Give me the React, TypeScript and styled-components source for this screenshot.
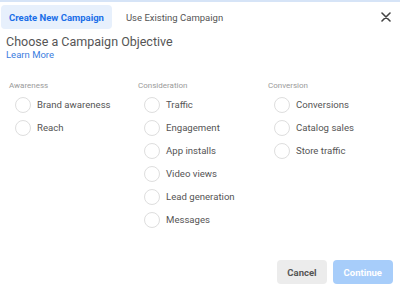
import styled, { createGlobalStyle } from 'styled-components';

const GlobalStyle = createGlobalStyle`
  html, body {
    margin: 0;
    padding: 0;
    background: #ffffff;
  }
  body {
    font-family: Roboto, "Liberation Sans", Arial, sans-serif;
  }
`;

const Dialog = styled.div`
  width: 400px;
  height: 304px;
  box-sizing: border-box;
  border-top: 2px solid #d6e4f7;
  display: flex;
  flex-direction: column;
  background: #fff;
`;

const TabBar = styled.div`
  display: flex;
  align-items: center;
  height: 26px;
  padding: 2px 0 0 1px;
`;

const Tab = styled.div<{ $active?: boolean }>`
  height: 24px;
  display: flex;
  align-items: center;
  padding: 0 8px;
  margin-right: 6px;
  border-radius: 4px;
  font-size: 9.5px;
  font-weight: ${(p) => (p.$active ? 700 : 400)};
  color: ${(p) => (p.$active ? '#1a6ee8' : '#555')};
  background: ${(p) => (p.$active ? '#e7f0fc' : 'transparent')};
`;

const Close = styled.div`
  margin-left: auto;
  margin-right: 8px;
  width: 12px;
  height: 12px;
  display: flex;
  align-items: center;
  justify-content: center;
`;

const Header = styled.div`
  padding: 4px 6px 0;
`;

const Title = styled.h1`
  margin: 0;
  font-size: 12.5px;
  font-weight: 400;
  color: #555;
  line-height: 15px;
`;

const LearnMore = styled.a`
  display: block;
  font-size: 9.5px;
  color: #3b7de0;
  line-height: 12px;
  text-decoration: none;
`;

const Columns = styled.div`
  display: grid;
  grid-template-columns: 129px 130px 1fr;
  padding: 20px 0 0 9px;
`;

const Column = styled.div`
  display: flex;
  flex-direction: column;
`;

const ColumnTitle = styled.div`
  font-size: 8px;
  color: #9a9a9a;
  line-height: 10px;
  margin-bottom: 2px;
`;

const Option = styled.label`
  display: flex;
  align-items: center;
  height: 23px;
  padding-left: 6px;
  font-size: 9.6px;
  color: #555;
`;

const Radio = styled.span`
  width: 14px;
  height: 14px;
  border-radius: 50%;
  border: 1px solid #dedede;
  margin-right: 6px;
  flex-shrink: 0;
`;

const Footer = styled.div`
  margin-top: auto;
  display: flex;
  justify-content: flex-end;
  gap: 6px;
  padding: 0 7px 20px 0;
`;

const Button = styled.button<{ $primary?: boolean }>`
  height: 24px;
  border: none;
  border-radius: 4px;
  font-family: inherit;
  font-size: 9.5px;
  font-weight: 700;
  padding: 0 ${(p) => (p.$primary ? '11px' : '10px')};
  color: ${(p) => (p.$primary ? '#ffffff' : '#555')};
  background: ${(p) => (p.$primary ? '#a7cdfa' : '#ececec')};
`;

const groups = [
  { title: 'Awareness', items: ['Brand awareness', 'Reach'] },
  {
    title: 'Consideration',
    items: ['Traffic', 'Engagement', 'App installs', 'Video views', 'Lead generation', 'Messages'],
  },
  { title: 'Conversion', items: ['Conversions', 'Catalog sales', 'Store traffic'] },
];

export default function App() {
  return (
    <>
      <GlobalStyle />
      <Dialog>
        <TabBar>
          <Tab $active>Create New Campaign</Tab>
          <Tab>Use Existing Campaign</Tab>
          <Close>
            <svg width="10" height="10" viewBox="0 0 10 10">
              <path d="M1 1L9 9M9 1L1 9" stroke="#444" strokeWidth="1.6" strokeLinecap="round" />
            </svg>
          </Close>
        </TabBar>
        <Header>
          <Title>Choose a Campaign Objective</Title>
          <LearnMore href="#">Learn More</LearnMore>
        </Header>
        <Columns>
          {groups.map((g) => (
            <Column key={g.title}>
              <ColumnTitle>{g.title}</ColumnTitle>
              {g.items.map((item) => (
                <Option key={item}>
                  <Radio />
                  {item}
                </Option>
              ))}
            </Column>
          ))}
        </Columns>
        <Footer>
          <Button>Cancel</Button>
          <Button $primary>Continue</Button>
        </Footer>
      </Dialog>
    </>
  );
}
